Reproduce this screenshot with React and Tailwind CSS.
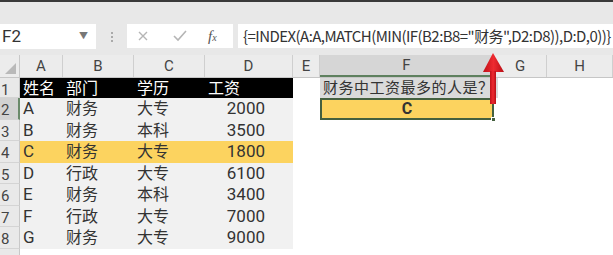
import React from "react";

const font = { fontFamily: 'Roboto, "Noto Sans CJK SC", sans-serif' };
const cjk = { fontFamily: '"Noto Sans CJK SC", "Noto Sans", sans-serif' };

const rows = [
  ["A", "财务", "大专", "2000"],
  ["B", "财务", "本科", "3500"],
  ["C", "财务", "大专", "1800"],
  ["D", "行政", "大专", "6100"],
  ["E", "财务", "本科", "3400"],
  ["F", "行政", "大专", "7000"],
  ["G", "财务", "大专", "9000"],
];

function RowHdr({ n, active }) {
  return (
    <div
      className={
        "w-[20px] shrink-0 flex items-center pl-[1px] text-[15px] leading-[16px] text-[#444] border-b border-[#d4d4d4] " +
        (active ? "bg-[#d2d2d2] border-r-2 border-r-[#6a8a6a]" : "bg-[#e9e9e9] border-r border-r-[#c8c8c8]")
      }
    >
      <span className="pt-[4px]">{n}</span>
    </div>
  );
}

function Cell({ w, className = "", children }) {
  return (
    <div className={"shrink-0 h-full flex items-center " + className} style={{ width: w }}>
      <span className="leading-[17px]">{children}</span>
    </div>
  );
}

export default function App() {
  return (
    <div className="w-[613px] h-[255px] overflow-hidden bg-white relative" style={font}>
      {/* top strip */}
      <div className="h-[22px] bg-[#e8e8e8] border-t-2 border-[#3a3a3a]" />
      {/* formula bar */}
      <div className="h-[30px] bg-[#e8e8e8] flex items-start pt-[2px]">
        <div className="w-[96px] shrink-0 h-[25px] bg-white flex items-center justify-between pl-[2px] pr-[8px]">
          <span className="text-[17px] text-[#333] leading-none">F2</span>
          <span className="text-[9px] text-[#777]">▼</span>
        </div>
        <div className="w-[31px] shrink-0 h-[25px] flex flex-col items-center justify-center gap-[2px]">
          <div className="w-[2px] h-[2px] bg-[#aaa]" />
          <div className="w-[2px] h-[2px] bg-[#aaa]" />
          <div className="w-[2px] h-[2px] bg-[#aaa]" />
        </div>
        <div className="w-[106px] shrink-0 h-[24px] bg-white flex items-center">
          <svg width="12" height="12" viewBox="0 0 12 12" className="ml-[10px]">
            <path d="M2 2 L10 10 M10 2 L2 10" stroke="#b5b5b5" strokeWidth="1.4" />
          </svg>
          <svg width="14" height="12" viewBox="0 0 14 12" className="ml-[24px]">
            <path d="M1 6 L5 10 L13 1" stroke="#b5b5b5" strokeWidth="1.6" fill="none" />
          </svg>
          <span className="ml-[21px] text-[15px] italic text-[#555]" style={{ fontFamily: '"Liberation Serif", serif' }}>
            f<span className="text-[10px]">x</span>
          </span>
        </div>
        <div className="ml-[5px] flex-1 min-w-0 h-[24px] bg-white flex items-center pl-[5px] overflow-hidden">
          <span className="text-[15px] text-[#333] whitespace-nowrap tracking-[-0.55px]" style={cjk}>
            {'{=INDEX(A:A,MATCH(MIN(IF(B2:B8="财务",D2:D8)),D:D,0))}'}
          </span>
        </div>
      </div>
      <div className="h-[3px] bg-[#e8e8e8]" />
      {/* column headers */}
      <div className="h-[23px] flex bg-[#ececec] border-b border-[#c6c6c6] text-[15px] text-[#444]">
        <div className="w-[20px] shrink-0 flex items-end justify-end pr-[3px] pb-[3px] border-r border-[#c8c8c8]">
          <svg width="11" height="11" viewBox="0 0 11 11">
            <path d="M11 0 L11 11 L0 11 Z" fill="#b9b9b9" />
          </svg>
        </div>
        {[
          ["A", 43],
          ["B", 71],
          ["C", 71],
          ["D", 88],
          ["E", 27],
        ].map(([l, w]) => (
          <div key={l} className="shrink-0 flex items-center justify-center border-r border-[#cfcfcf]" style={{ width: w }}>
            {l}
          </div>
        ))}
        <div className="w-[174px] shrink-0 flex items-center justify-center bg-[#d6d6d6] border-b-2 border-[#5e805e] border-r border-r-[#cfcfcf]">
          F
        </div>
        <div className="w-[53px] shrink-0 flex items-center justify-center border-r border-[#cfcfcf]">G</div>
        <div className="w-[66px] shrink-0 flex items-center justify-center border-r border-[#cfcfcf]">H</div>
      </div>
      {/* row 1 */}
      <div className="h-[20px] flex">
        <RowHdr n="1" />
        <div className="w-[273px] shrink-0 h-full bg-black text-white text-[16px] flex">
          <Cell w={43} className="pl-[3px]">姓名</Cell>
          <Cell w={71} className="pl-[3px]">部门</Cell>
          <Cell w={71} className="pl-[3px]">学历</Cell>
          <Cell w={88} className="pl-[3px]">工资</Cell>
        </div>
        <div className="w-[27px] shrink-0" />
        <div className="w-[178px] shrink-0 h-full bg-[#dadada] text-[15px] text-[#333] flex items-center pl-[3px] tracking-[0.5px]">
          <span className="leading-[17px]">财务中工资最多的人是？</span>
        </div>
      </div>
      {rows.map((r, i) => {
        const hl = i === 2;
        return (
          <div key={i} className="h-[21.5px] flex">
            <RowHdr n={String(i + 2)} active={i === 0} />
            <div
              className={
                "w-[273px] shrink-0 h-full text-[16px] text-[#333] flex " +
                (hl ? "bg-[#fcd35f]" : "bg-[#f1f1f1]")
              }
            >
              <Cell w={43} className="pl-[3px] text-[17px]">{r[0]}</Cell>
              <Cell w={71} className="pl-[3px]">{r[1]}</Cell>
              <Cell w={71} className="pl-[3px]">{r[2]}</Cell>
              <Cell w={60} className="justify-end text-[17px]">{r[3]}</Cell>
            </div>
            <div className="w-[27px] shrink-0" />
            {i === 0 && (
              <div className="w-[174px] shrink-0 h-[21.5px] bg-[#fcd35f] border-2 border-[#44603f] flex items-center justify-center text-[16px] font-bold text-[#333] relative">
                <span className="leading-[16px]">C</span>
                <div className="absolute right-[-4px] bottom-[-4px] w-[5px] h-[5px] bg-[#44603f] border border-white" />
              </div>
            )}
          </div>
        );
      })}
      <div className="h-[10px] flex">
        <div className="w-[20px] bg-[#e9e9e9] border-r border-[#c8c8c8]" />
      </div>
      {/* red arrow */}
      <svg className="absolute left-[480px] top-[52px]" width="26" height="54" viewBox="0 0 26 54">
        <defs>
          <linearGradient id="sh" x1="0" x2="1">
            <stop offset="0" stopColor="#c01018" />
            <stop offset="0.5" stopColor="#ee2a30" />
            <stop offset="1" stopColor="#b80e16" />
          </linearGradient>
        </defs>
        <path d="M13 1 L24 20 L3 20 Z" fill="url(#sh)" />
        <rect x="10" y="19" width="6" height="33" fill="url(#sh)" />
      </svg>
    </div>
  );
}
